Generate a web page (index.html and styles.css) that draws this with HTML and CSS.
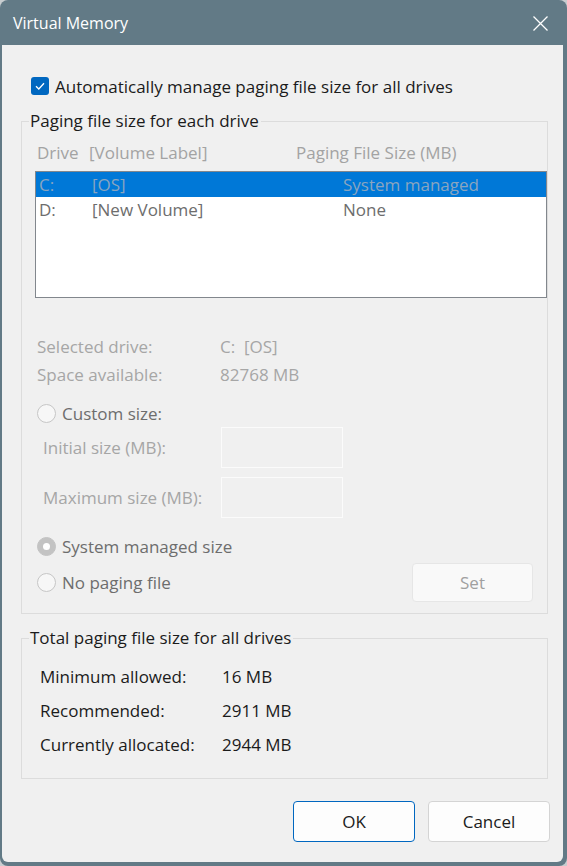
FILE: index.html
```html
<!DOCTYPE html>
<html>
<head>
<meta charset="utf-8">
<title>Virtual Memory</title>
<link rel="stylesheet" href="styles.css">
</head>
<body>
<div class="window">
  <div class="titlebar">
    <span class="title">Virtual Memory</span>
    <svg class="close" width="15" height="15" viewBox="0 0 15 15"><path d="M0.5 0.5 L14.5 14.5 M14.5 0.5 L0.5 14.5" stroke="#ffffff" stroke-width="1.3" fill="none"/></svg>
  </div>
  <div class="client">
    <div class="check-row">
      <span class="checkbox"><svg width="18" height="18" viewBox="0 0 18 18"><path d="M5 9.2 L7.8 12 L13 6.2" stroke="#ffffff" stroke-width="1.3" fill="none"/></svg></span>
      <span class="check-label">Automatically manage paging file size for all drives</span>
    </div>

    <fieldset class="group g1">
      <legend>Paging file size for each drive</legend>
      <div class="g1-body">
        <div class="list-header">
          <span>Drive</span><span>[Volume Label]</span><span>Paging File Size (MB)</span>
        </div>
        <div class="listbox">
          <div class="lrow selected"><span>C:</span><span>[OS]</span><span>System managed</span></div>
          <div class="lrow"><span>D:</span><span>[New Volume]</span><span>None</span></div>
        </div>
        <div class="info">
          <span>Selected drive:</span><span>C:&nbsp;&nbsp;[OS]</span>
          <span>Space available:</span><span>82768 MB</span>
        </div>
        <div class="radio-row r-custom"><span class="radio"></span><span>Custom size:</span></div>
        <div class="field-row f-initial"><span class="flabel">Initial size (MB):</span><span class="input"></span></div>
        <div class="field-row f-max"><span class="flabel">Maximum size (MB):</span><span class="input"></span></div>
        <div class="radio-row r-system"><span class="radio checked"></span><span>System managed size</span></div>
        <div class="set-row">
          <div class="radio-row"><span class="radio"></span><span>No paging file</span></div>
          <div class="btn set">Set</div>
        </div>
      </div>
    </fieldset>

    <fieldset class="group g2">
      <legend>Total paging file size for all drives</legend>
      <div class="totals">
        <span>Minimum allowed:</span><span>16 MB</span>
        <span>Recommended:</span><span>2911 MB</span>
        <span>Currently allocated:</span><span>2944 MB</span>
      </div>
    </fieldset>

    <div class="buttons">
      <div class="btn ok">OK</div>
      <div class="btn cancel">Cancel</div>
    </div>
  </div>
</div>
</body>
</html>
```

FILE: styles.css
```css
* { box-sizing: border-box; }
html, body {
  margin: 0;
  padding: 0;
  background: #c8cdd0;
}
body {
  width: 567px;
  height: 866px;
  font-family: "Open Sans", "Noto Sans", sans-serif;
  font-size: 17px;
  color: #1b1b1b;
}
.window {
  width: 567px;
  height: 866px;
  background: #627a86;
  border-radius: 8px;
  padding: 0 4px 4px 2px;
  display: flex;
  flex-direction: column;
}
.titlebar {
  height: 45px;
  flex: none;
  display: flex;
  align-items: center;
  justify-content: space-between;
  padding: 0 19px 0 13px;
  margin: 0 -4px 0 -2px;
}
.title {
  color: #ffffff;
  font-size: 16px;
}
.close { display: block; margin-top: 1px; }
.client {
  flex: 1;
  background: #f0f0f0;
  border-radius: 0 0 6px 6px;
  padding: 30px 0 0 0;
}
.check-row {
  height: 22px;
  display: flex;
  align-items: center;
  padding-left: 29px;
}
.checkbox {
  width: 18px;
  height: 18px;
  border-radius: 3px;
  background: #0067c0;
  display: block;
  margin-right: 6px;
  flex: none;
}
.checkbox svg { display: block; }

.group {
  margin: 13px 15px 0 19px;
  padding: 0;
  border: 1px solid #dcdcdc;
  min-width: 0;
}
.group legend {
  margin-left: 7px;
  padding: 0 2px 0 1px;
  height: 22px;
  line-height: 22px;
  color: #1b1b1b;
}
.g1-body {
  padding: 10px 0 11px 13px;
}
.list-header {
  height: 22px;
  line-height: 22px;
  display: grid;
  grid-template-columns: 52px 207px 1fr;
  padding-left: 2px;
  color: #a3a3a3;
  white-space: nowrap;
}
.listbox {
  margin-top: 7px;
  height: 127px;
  background: #ffffff;
  border: 1px solid #82878d;
}
.lrow {
  height: 25px;
  line-height: 25px;
  display: grid;
  grid-template-columns: 53px 251px 1fr;
  padding-left: 3px;
  color: #6d6d6d;
  white-space: nowrap;
}
.lrow.selected {
  background: #0078d7;
  color: #8aa5bf;
}
.info {
  margin-top: 35px;
  display: grid;
  grid-template-columns: 183px 1fr;
  grid-auto-rows: 28px;
  line-height: 28px;
  padding-left: 2px;
  color: #a6a6a6;
}
.radio-row {
  height: 22px;
  display: flex;
  align-items: center;
  padding-left: 2px;
  color: #6d6d6d;
}
.radio {
  width: 19px;
  height: 19px;
  border-radius: 50%;
  border: 1px solid #c6c6c6;
  background: #f7f7f7;
  margin-right: 6px;
  flex: none;
  display: flex;
  align-items: center;
  justify-content: center;
}
.radio.checked {
  background: #c3c3c3;
  border-color: #c3c3c3;
}
.radio.checked::after {
  content: "";
  width: 7px;
  height: 7px;
  border-radius: 50%;
  background: #ffffff;
}
.r-custom { margin-top: 13px; }
.field-row {
  display: flex;
  align-items: center;
  padding-left: 8px;
  color: #a6a6a6;
}
.f-initial { margin-top: 3px; }
.f-max { margin-top: 9px; }
.flabel { width: 178px; white-space: nowrap; }
.input {
  width: 122px;
  height: 41px;
  border: 1px solid #fbfbfb;
}
.r-system { margin-top: 17px; }
.set-row {
  margin-top: 6px;
  display: flex;
  align-items: center;
  justify-content: space-between;
  padding-right: 14px;
}
.btn {
  height: 41px;
  border-radius: 4px;
  display: flex;
  align-items: center;
  justify-content: center;
}
.btn.set {
  width: 121px;
  height: 39px;
  background: #f9f9f9;
  border: 1px solid #e6e6e6;
  color: #a0a0a0;
}
.g2 { margin-top: 13px; }
.totals {
  padding: 11px 0 16px 18px;
  display: grid;
  grid-template-columns: 182px 1fr;
  grid-auto-rows: 34px;
  line-height: 34px;
  color: #1b1b1b;
}
.buttons {
  margin-top: 22px;
  display: flex;
  justify-content: flex-end;
  gap: 13px;
  padding-right: 13px;
}
.btn.ok, .btn.cancel {
  width: 122px;
  background: #fdfdfd;
  color: #1b1b1b;
}
.btn.ok { border: 1px solid #0067c0; }
.btn.cancel { border: 1px solid #d4d4d4; }
```
